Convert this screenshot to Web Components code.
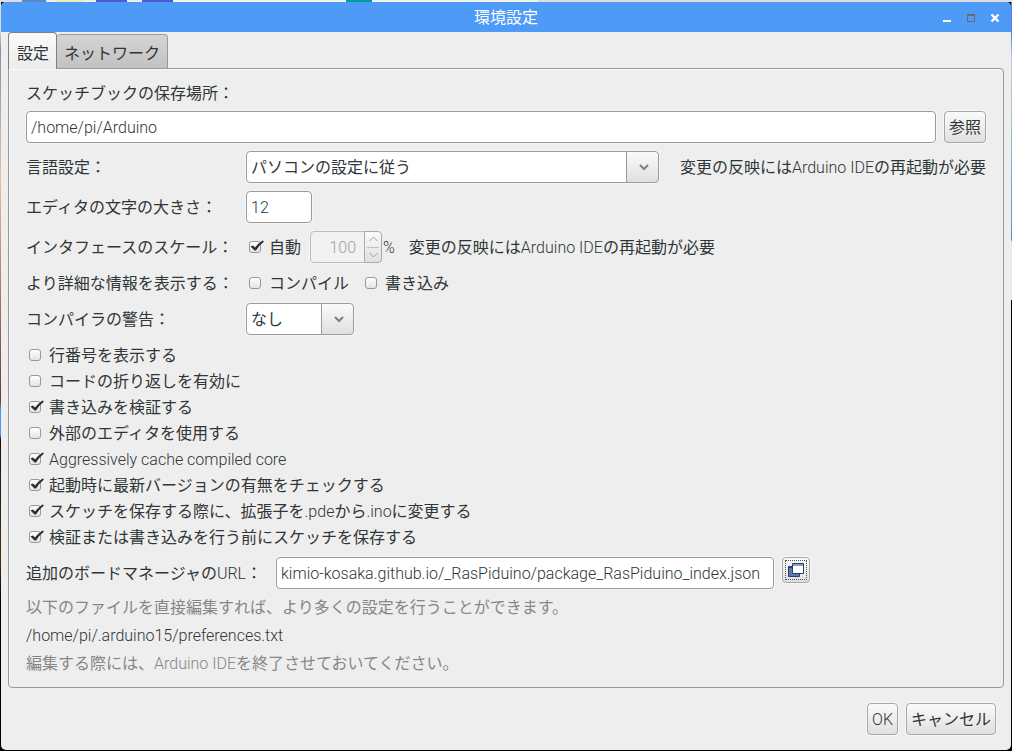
<!DOCTYPE html>
<html lang="ja">
<head>
<meta charset="utf-8">
<title>環境設定</title>
<style>
html, body { margin: 0; min-height: 100%; }
body { font: 400 16px/20px Roboto, "Noto Sans CJK JP", sans-serif; color: #2e3638; }
</style>
</head>
<body>
<pref-desktop>
  <pref-window heading="環境設定">
    <pref-tabs>
      <pref-text label="スケッチブックの保存場所：" value="/home/pi/Arduino" layout="stacked">
        <pref-button>参照</pref-button>
      </pref-text>
      <pref-combo label="言語設定：" value="パソコンの設定に従う" wide>
        <span>変更の反映には<pref-latin>Arduino IDE</pref-latin>の再起動が必要</span>
      </pref-combo>
      <pref-text label="エディタの文字の大きさ：" value="12" layout="short"></pref-text>
      <pref-group label="インタフェースのスケール：" size="tall">
        <pref-check checked>自動</pref-check>
        <pref-spinner value="100" unit="%"></pref-spinner>
        <span>変更の反映には<pref-latin>Arduino IDE</pref-latin>の再起動が必要</span>
      </pref-group>
      <pref-group label="より詳細な情報を表示する：">
        <pref-check>コンパイル</pref-check>
        <pref-check>書き込み</pref-check>
      </pref-group>
      <pref-combo label="コンパイラの警告：" value="なし"></pref-combo>
      <pref-list>
        <pref-check>行番号を表示する</pref-check>
        <pref-check>コードの折り返しを有効に</pref-check>
        <pref-check checked>書き込みを検証する</pref-check>
        <pref-check>外部のエディタを使用する</pref-check>
        <pref-check checked><pref-latin>Aggressively cache compiled core</pref-latin></pref-check>
        <pref-check checked>起動時に最新バージョンの有無をチェックする</pref-check>
        <pref-check checked>スケッチを保存する際に、拡張子を<pref-latin>.pde</pref-latin>から<pref-latin>.ino</pref-latin>に変更する</pref-check>
        <pref-check checked>検証または書き込みを行う前にスケッチを保存する</pref-check>
      </pref-list>
      <pref-text label="追加のボードマネージャの<pref-latin>URL</pref-latin>：" value="kimio-kosaka.github.io/_RasPiduino/package_RasPiduino_index.json" layout="url">
        <pref-button icon></pref-button>
      </pref-text>
      <pref-note muted>以下のファイルを直接編集すれば、より多くの設定を行うことができます。</pref-note>
      <pref-note><pref-latin>/home/pi/.arduino15/preferences.txt</pref-latin></pref-note>
      <pref-note muted>編集する際には、<pref-latin>Arduino IDE</pref-latin>を終了させておいてください。</pref-note>
    </pref-tabs>
    <pref-button slot="actions"><pref-latin>OK</pref-latin></pref-button>
    <pref-button slot="actions">キャンセル</pref-button>
  </pref-window>
</pref-desktop>

<script>
const FIELD = `
  input, select {
    box-sizing: border-box; height: 32px; margin: 0; padding: 0 4px;
    border: 1px solid #9a9a9a; border-radius: 4px; outline: 0;
    background: #fff; color: inherit; font: inherit;
    box-shadow: 0 0 0 1px #f6f6f6;
  }
  input { font-weight: 300; }
  label { height: 20px; line-height: 22px; white-space: nowrap; }
`;

function define(name, render, ready) {
  customElements.define(name, class extends HTMLElement {
    connectedCallback() {
      if (this.shadowRoot) return;
      const t = document.createElement('template');
      t.innerHTML = render(this);
      this.attachShadow({ mode: 'open' }).append(t.content.cloneNode(true));
      if (ready) ready(this);
    }
  });
}
const attr = (el, n) => el.getAttribute(n) || '';

// Latin runs are set lighter than the Japanese text around them
define('pref-latin', () => `<style>:host { font-weight: 300; }</style><slot></slot>`);

// Strip of the desktop that shows around the dialog
define('pref-desktop', () => `
  <style>
    :host {
      display: flex; flex-direction: column; box-sizing: border-box; min-height: 100vh; padding: 2px 1px 1px;
      background:
        linear-gradient(90deg, #dedede 22px, #5588cc 22px 46px, #eee 46px 57px, #eeeeb0 57px 83px, #eee 83px 96px, #4a5cd8 96px 127px, #eee 127px 142px, #4a5cd8 142px 173px, #f2f2ec 173px 346px, #009e9e 346px 372px, #f2f2ec 372px 538px, #ddd 538px) top / 100% 2px no-repeat,
        linear-gradient(#dedede 28px, #8090a8 50px, #c8b0a0 130px, #e0c0a8 180px, #604030 400px, #4d9af7 411px 434px, #18100c 440px, #4a3010 560px, #000 600px) left / 1px 100% no-repeat,
        linear-gradient(#5580d8 32px, #c4ccdc 60px, #a8c4d4 110px, #5f93a8 240px, #e8e8e8 242px 300px, #000 300px) right / 1px 100% no-repeat,
        #000;
    }
  </style><slot></slot>`);

define('pref-window', el => `
  <style>
    :host { display: flex; flex-direction: column; flex: 1; background: #eee; border-radius: 5px; overflow: hidden; }
    header { display: grid; grid-template-columns: 1fr auto 1fr; align-items: center; height: 30px; background: #4d9af7; color: #fff; }
    h1 { grid-column: 2; margin: 0; height: 20px; font-weight: 400; font-size: 16px; line-height: 22px; }
    nav { display: flex; justify-content: flex-end; gap: 8px; padding-right: 8px; }
    nav button { display: block; width: 16px; height: 16px; padding: 0; border: 0; background: none; }
    svg { display: block; }
    main { padding: 0 7px; }
    footer { display: flex; justify-content: flex-end; gap: 8px; padding: 15px; }
  </style>
  <header>
    <h1>${attr(el, 'heading')}</h1>
    <nav>
      <button aria-label="最小化"><svg width="16" height="16"><path d="M4 11h8v2H4z" fill="#fff"/></svg></button>
      <button aria-label="最大化"><svg width="16" height="16"><path d="M4 5h8v8H4zM5 7v5h6V7z" fill="#6a6a6a" fill-rule="evenodd"/></svg></button>
      <button aria-label="閉じる"><svg width="16" height="16"><path d="M4.500 5.500l7 7M11.500 5.500l-7 7" stroke="#fff" stroke-width="2.400"/></svg></button>
    </nav>
  </header>
  <main><slot></slot></main>
  <footer><slot name="actions"></slot></footer>`);

define('pref-tabs', () => `
  <style>
    :host { display: block; }
    [role=tablist] { display: flex; align-items: flex-end; height: 37px; margin-bottom: -1px; }
    button { box-sizing: border-box; margin: 0; border: 1px solid #999; border-radius: 4px 4px 0 0; color: inherit; font: inherit; }
    .on { position: relative; height: 37px; padding: 6px 7px 0 8px; border-color: #808080; border-bottom: 0; background: linear-gradient(#fafafa, #eee 30px); }
    .off { height: 35px; padding: 5px 7px 0; border-left: 0; background: linear-gradient(#d4d4d4, #c2c2c2); }
    section { display: flex; flex-direction: column; gap: 8px; padding: 14px 17px 14px; border: 1px solid #999; border-radius: 0 4px 4px 4px; box-shadow: inset 1px 1px #f8f8f8; }
  </style>
  <div role="tablist">
    <button class="on" role="tab" aria-selected="true">設定</button>
    <button class="off" role="tab" aria-selected="false">ネットワーク</button>
  </div>
  <section role="tabpanel"><slot></slot></section>`);

define('pref-text', el => `
  <style>${FIELD}
    :host { display: flex; align-items: center; flex-wrap: nowrap; }
    label { width: 220px; flex: none; }
    input { flex: 1; min-width: 0; margin-right: 8px; }
    :host([layout=stacked]) { flex-wrap: wrap; row-gap: 8px; }
    :host([layout=stacked]) label { width: 100%; }
    :host([layout=short]) input { flex: 0 0 66px; }
    :host([layout=url]) label { width: 250px; }
    :host([layout=url]) input { flex: 0 1 498px; }
    :host([layout=url]) ::slotted(*) { align-self: flex-start; }
  </style>
  <label for="f">${attr(el, 'label')}</label><input id="f" type="text" value="${attr(el, 'value')}"><slot></slot>`);

define('pref-combo', el => `
  <style>${FIELD}
    :host { display: flex; align-items: center; }
    label { width: 220px; flex: none; }
    .box { display: grid; width: 108px; }
    :host([wide]) .box { flex: 1; min-width: 0; margin-right: 21px; }
    select, svg { grid-area: 1 / 1; }
    select {
      appearance: none; width: 100%; padding-top: 2px; padding-right: 36px;
      background: linear-gradient(#999, #999) right 31px top / 1px 100% no-repeat, linear-gradient(#fafafa, #e0e0e0) right / 31px 100% no-repeat, #fff;
    }
    svg { justify-self: end; align-self: center; margin-right: 10px; pointer-events: none; }
    ::slotted(span) { height: 20px; line-height: 22px; white-space: nowrap; }
  </style>
  <label for="c">${attr(el, 'label')}</label>
  <div class="box">
    <select id="c"><option>${attr(el, 'value')}</option></select>
    <svg width="10" height="8"><path d="M1 2l4 4 4-4" fill="none" stroke="#808080" stroke-width="2"/></svg>
  </div><slot></slot>`);

define('pref-group', el => `
  <style>
    :host { display: flex; align-items: center; height: 24px; }
    :host([size=tall]) { height: 32px; }
    .name { width: 220px; flex: none; white-space: nowrap; }
    .name, ::slotted(span) { height: 20px; line-height: 22px; }
    .items { display: flex; align-items: center; gap: 13px; white-space: nowrap; }
    :host([size=tall]) .items { gap: 9px; }
  </style>
  <span class="name" id="n">${attr(el, 'label')}</span>
  <div class="items" role="group" aria-labelledby="n"><slot></slot></div>`);

define('pref-list', () => `<style>:host { display: flex; flex-direction: column; gap: 2px; }</style><slot></slot>`);

define('pref-check', el => `
  <style>
    :host { display: block; }
    label { display: flex; align-items: center; gap: 8px; height: 24px; padding-left: 3px; white-space: nowrap; }
    .text { height: 20px; line-height: 22px; }
    .box { position: relative; width: 12px; height: 12px; }
    input { appearance: none; display: block; box-sizing: border-box; width: 12px; height: 12px; margin: 0; border: 1px solid #999; border-radius: 3px; background: linear-gradient(#fff, #e4e4e4); }
    svg { position: absolute; left: 0; top: -2px; display: none; pointer-events: none; }
    input:checked + svg { display: block; }
  </style>
  <label><span class="box"><input type="checkbox" ${el.hasAttribute('checked') ? 'checked' : ''}><svg width="16" height="14"><path d="M1.500 7.500L4 6.500 6 8.500Q9 4.500 13.500 1.500L15 2.500Q10 6.500 7 11.500H5.500Z" fill="#273032"/></svg></span><span class="text"><slot></slot></span></label>`);

define('pref-spinner', el => `
  <style>${FIELD}
    :host { display: flex; align-items: center; margin-right: 5px; }
    label { font-weight: 300; }
    input { appearance: textfield; width: 55px; padding-right: 8px; border-color: #bbb; border-radius: 4px 0 0 4px; background: #f2f2f2; color: #a0a0a0; text-align: right; }
    input::-webkit-inner-spin-button { display: none; }
    .step { box-sizing: border-box; display: flex; flex-direction: column; width: 18px; height: 32px; margin-left: -1px; margin-right: 1px; border: 1px solid #aaa; border-radius: 0 4px 4px 0; background: linear-gradient(#fafafa, #e0e0e0); }
    button { flex: 1; display: grid; place-items: center; margin: 0 2px; padding: 0; border: 0; background: none; }
    button + button { border-top: 1px solid #c0c0c0; }
  </style>
  <input id="s" type="number" value="${attr(el, 'value')}" disabled>
  <div class="step">
    <button disabled aria-label="増やす"><svg width="9" height="6"><path d="M.5 5l4-4 4 4" fill="none" stroke="#a0a0a0"/></svg></button>
    <button disabled aria-label="減らす"><svg width="9" height="6"><path d="M.5 1l4 4 4-4" fill="none" stroke="#a0a0a0"/></svg></button>
  </div>
  <label for="s">${attr(el, 'unit')}</label>`);

define('pref-button', el => `
  <style>
    :host { display: block; flex: none; }
    button { display: block; box-sizing: border-box; height: 32px; margin: 0; padding: 2px 4px 0; border: 1px solid #a8a8a8; border-radius: 4px; background: linear-gradient(#fafafa, #e0e0e0); box-shadow: 0 0 0 1px #f6f6f6; color: inherit; font: inherit; white-space: nowrap; }
    :host([icon]) button { width: 28px; height: 26px; padding: 2px; }
    .focus { display: grid; place-items: center; box-sizing: border-box; height: 20px; border: 1px dotted #555; }
    svg { display: block; }
  </style>
  ${el.hasAttribute('icon')
    ? `<button aria-label="URLを編集"><span class="focus"><svg width="16" height="14"><path d="M.5 3.500h11v10H.5z" fill="#6078aa" stroke="#203f73"/><path d="M1 4.500h4" stroke="#203f73"/><path d="M4.500.5h11v10h-11z" fill="#fff" stroke="#203f73"/><path d="M5 2h10" stroke="#203f73"/></svg></span></button>`
    : '<button><slot></slot></button>'}`);

define('pref-note', () => `
  <style>
    :host { display: block; height: 20px; line-height: 22px; }
    :host([muted]) { color: #868686; }
  </style><slot></slot>`);
</script>
</body>
</html>
